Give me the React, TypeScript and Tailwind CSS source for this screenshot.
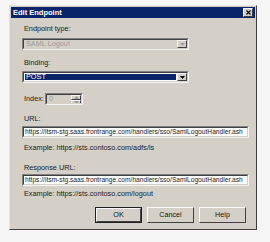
import React from "react";

const font = { fontFamily: '"Liberation Sans", Arial, sans-serif' };

function Sunken({ children, className = "" }: { children?: React.ReactNode; className?: string }) {
  return (
    <div className={`border-t border-l border-t-[#808080] border-l-[#808080] border-b border-r border-b-[#f4f4f4] border-r-[#f4f4f4] ${className}`}>
      <div className="h-full border-t border-l border-t-[#404040] border-l-[#404040] border-b border-r border-b-[#d4d0c8] border-r-[#d4d0c8] flex items-center overflow-hidden">
        {children}
      </div>
    </div>
  );
}

function DropBtn({ disabled }: { disabled?: boolean }) {
  return (
    <div className="h-full w-[10px] shrink-0 bg-[#d4d0c8] border-t border-l border-t-[#f4f4f4] border-l-[#f4f4f4] border-b border-r border-b-[#404040] border-r-[#404040] flex items-center justify-center">
      <svg width="5" height="3" viewBox="0 0 5 3">
        <path d="M0 0h5L2.5 3z" fill={disabled ? "#9a9a9a" : "#000"} />
      </svg>
    </div>
  );
}

function Btn({ label, def }: { label: string; def?: boolean }) {
  return (
    <div className={`w-[47px] h-[16px] ${def ? "border border-[#202020]" : ""}`}>
      <div className="w-full h-full bg-[#d4d0c8] border-t border-l border-t-[#fafafa] border-l-[#fafafa] border-b border-r border-b-[#404040] border-r-[#404040] flex items-center justify-center text-[7.2px] text-[#111]">
        {label}
      </div>
    </div>
  );
}

export default function App() {
  return (
    <div className="w-[270px] h-[242px] bg-[#f6f6f6] relative overflow-hidden" style={font}>
      <div className="ml-[9px] mt-[5px] w-[248px] h-[225px] bg-[#d4d0c8] border-t border-l border-t-[#e6e4e0] border-l-[#e6e4e0] border-b border-r border-b-[#404040] border-r-[#404040] flex flex-col px-[1px] pt-[1px]">
        <div className="h-[11px] bg-[#0a246a] flex items-center justify-between pl-[2px] pr-[2px]">
          <span className="text-white font-bold text-[7.5px] leading-none">Edit Endpoint</span>
          <div className="w-[10px] h-[9px] bg-[#d4d0c8] border-t border-l border-t-[#fafafa] border-l-[#fafafa] border-b border-r border-b-[#404040] border-r-[#404040] flex items-center justify-center">
            <svg width="5" height="5" viewBox="0 0 5 5">
              <path d="M0.5 0.5L4.5 4.5M4.5 0.5L0.5 4.5" stroke="#000" strokeWidth="1.2" />
            </svg>
          </div>
        </div>

        <div className="flex flex-col pl-[11px] pr-[8px] text-[7.3px] text-[#1a1a1a]">
          <div className="mt-[6px] h-[10px] leading-[10px] pl-[2px]">Endpoint type:</div>
          <Sunken className="mt-[4px] w-[167px] h-[12px] bg-[#d4d0c8]">
            <span className="flex-1 pl-[2px] text-[#9a9a9a]">SAML Logout</span>
            <DropBtn disabled />
          </Sunken>

          <div className="mt-[8px] h-[10px] leading-[10px] pl-[2px]">Binding:</div>
          <Sunken className="mt-[3px] w-[167px] h-[12px] bg-white">
            <div className="flex-1 h-full p-[1px]">
              <div className="h-full bg-[#0a246a] text-white pl-[1px] flex items-center">POST</div>
            </div>
            <DropBtn />
          </Sunken>

          <div className="mt-[10px] flex items-center">
            <span className="w-[23px] pl-[2px]">Index:</span>
            <Sunken className="w-[38px] h-[12px] bg-[#d4d0c8]">
              <span className="flex-1 pl-[2px] text-[#a0a0a0]">0</span>
              <div className="h-full w-[10px] flex flex-col">
                <div className="flex-1 bg-[#d4d0c8] border-t border-l border-t-[#f4f4f4] border-l-[#f4f4f4] border-b border-r border-b-[#404040] border-r-[#404040] flex items-center justify-center">
                  <svg width="5" height="3" viewBox="0 0 5 3"><path d="M0 3h5L2.5 0z" fill="#9a9a9a" /></svg>
                </div>
                <div className="flex-1 bg-[#d4d0c8] border-t border-l border-t-[#f4f4f4] border-l-[#f4f4f4] border-b border-r border-b-[#404040] border-r-[#404040] flex items-center justify-center">
                  <svg width="5" height="3" viewBox="0 0 5 3"><path d="M0 0h5L2.5 3z" fill="#9a9a9a" /></svg>
                </div>
              </div>
            </Sunken>
          </div>

          <div className="mt-[9px] h-[10px] leading-[10px] pl-[2px]">URL:</div>
          <Sunken className="mt-[2px] w-[227px] h-[12px] bg-white">
            <span className="pl-[1px] whitespace-nowrap text-[6.65px]">https://itsm-stg.saas.frontrange.com/handlers/sso/SamlLogoutHandler.ash</span>
          </Sunken>
          <div className="mt-[5px] h-[10px] leading-[10px] pl-[2px] whitespace-nowrap">Example: https://sts.contoso.com/adfs/ls</div>

          <div className="mt-[10px] h-[10px] leading-[10px] pl-[2px]">Response URL:</div>
          <Sunken className="mt-[1px] w-[227px] h-[12px] bg-white">
            <span className="pl-[1px] whitespace-nowrap text-[6.65px]">https://itsm-stg.saas.frontrange.com/handlers/sso/SamlLogoutHandler.ash</span>
          </Sunken>
          <div className="mt-[3px] h-[10px] leading-[10px] pl-[2px] whitespace-nowrap">Example: https://sts.contoso.com/logout</div>

          <div className="mt-[8px] flex justify-end gap-[5px] pr-[1px]">
            <Btn label="OK" def />
            <Btn label="Cancel" />
            <Btn label="Help" />
          </div>
        </div>
      </div>
    </div>
  );
}
